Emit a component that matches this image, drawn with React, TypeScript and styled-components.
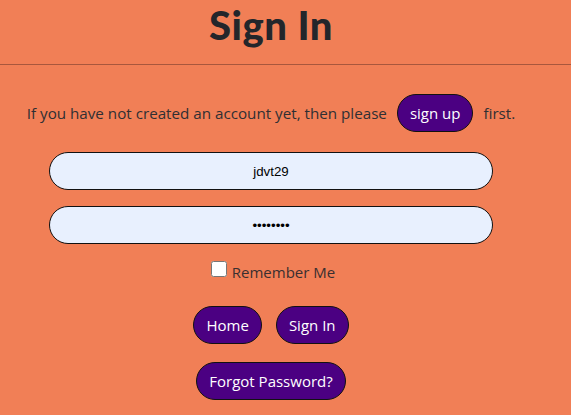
import React from "react";
import styled, { createGlobalStyle } from "styled-components";

const Global = createGlobalStyle`
  html, body { margin: 0; padding: 0; background: #f17f56; }
  body { font-family: "Open Sans", "Noto Sans", sans-serif; color: #2b2b2b; }
`;

const Page = styled.div`
  width: 571px;
  min-height: 415px;
  background: #f17f56;
`;

const Header = styled.header`
  height: 64px;
  border-bottom: 1px solid rgba(80, 40, 30, 0.45);
  width: 100%;
`;

const HeaderInner = styled.div`
  width: 542px;
  text-align: center;
`;

const Title = styled.h1`
  margin: 0;
  padding-top: 1px;
  font-family: "Lato", sans-serif;
  font-weight: 900;
  font-size: 40px;
  line-height: 48px;
  color: #23262b;
  letter-spacing: 0.5px;
`;

const Main = styled.main`
  width: 542px;
  display: flex;
  flex-direction: column;
  align-items: center;
  padding-top: 29px;
`;

const Intro = styled.p`
  margin: 0;
  display: flex;
  align-items: center;
  gap: 10px;
  font-size: 15.2px;
  color: #2f2f33;
`;

const PillButton = styled.button`
  height: 38px;
  padding: 0 12px;
  border-radius: 19px;
  border: 1px solid #111;
  background: #4b0082;
  color: #fff;
  font-family: "Open Sans", "Noto Sans", sans-serif;
  font-size: 15px;
  cursor: pointer;
`;

const Field = styled.input`
  box-sizing: border-box;
  width: 444px;
  height: 38px;
  border: 1px solid #111;
  border-radius: 19px;
  background: #e8f0fe;
  text-align: center;
  font-family: "Liberation Sans", Arial, sans-serif;
  font-size: 13.3px;
  color: #000;
  outline: none;
`;

const Fields = styled.div`
  display: flex;
  flex-direction: column;
  gap: 16px;
  margin-top: 20px;
`;

const RememberRow = styled.label`
  display: flex;
  align-items: center;
  margin-top: 17px;
  font-size: 15px;
  color: #3a2f30;
  margin-left: 4px;
`;

const Check = styled.input`
  width: 16px;
  height: 16px;
  margin: 0 5px 5px 0;
`;

const ButtonRow = styled.div`
  display: flex;
  gap: 14px;
  margin-top: 24px;
`;

const SecondRow = styled.div`
  margin-top: 18px;
`;

export default function App() {
  return (
    <Page>
      <Global />
      <Header>
        <HeaderInner>
          <Title>Sign In</Title>
        </HeaderInner>
      </Header>
      <Main>
        <Intro>
          <span>If you have not created an account yet, then please</span>
          <PillButton>sign up</PillButton>
          <span>first.</span>
        </Intro>
        <Fields>
          <Field type="text" defaultValue="jdvt29" />
          <Field type="password" defaultValue="password" />
        </Fields>
        <RememberRow>
          <Check type="checkbox" />
          Remember Me
        </RememberRow>
        <ButtonRow>
          <PillButton>Home</PillButton>
          <PillButton>Sign In</PillButton>
        </ButtonRow>
        <SecondRow>
          <PillButton>Forgot Password?</PillButton>
        </SecondRow>
      </Main>
    </Page>
  );
}
